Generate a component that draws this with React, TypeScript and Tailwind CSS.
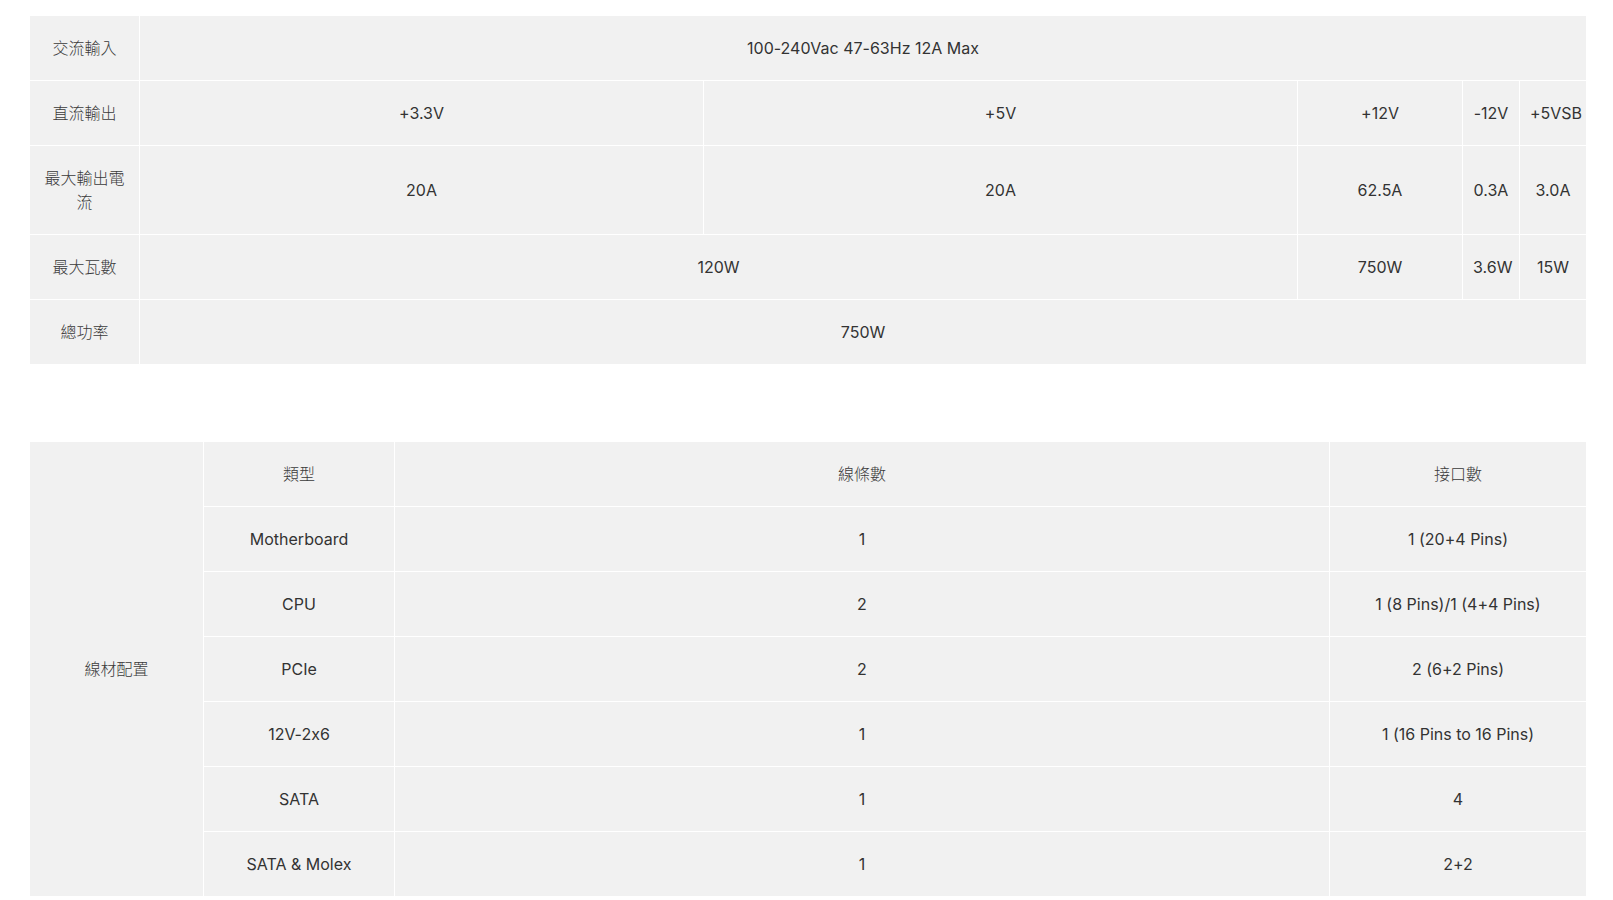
const cell = 'border border-white px-[10px] py-[20px] text-center align-middle leading-6'
const label = `${cell} font-light text-[#3a3a3a]`
const narrow = `${cell} px-0`

const cables = [
  ['Motherboard', '1', '1 (20+4 Pins)'],
  ['CPU', '2', '1 (8 Pins)/1 (4+4 Pins)'],
  ['PCIe', '2', '2 (6+2 Pins)'],
  ['12V-2x6', '1', '1 (16 Pins to 16 Pins)'],
  ['SATA', '1', '4'],
  ['SATA & Molex', '1', '2+2'],
]

export default function App() {
  return (
    <div className="min-h-screen bg-white pl-[29px] pr-[27px] pt-[15px] font-['Inter','Noto_Sans_CJK_TC',sans-serif] text-[16px] text-[#333] [font-variant-ligatures:no-contextual]">
      <table className="w-full table-fixed border-collapse bg-[#f1f1f1]">
        <colgroup>
          <col className="w-[110px]" />
          <col className="w-[564px]" />
          <col className="w-[594px]" />
          <col className="w-[165px]" />
          <col className="w-[57px]" />
          <col className="w-[67px]" />
        </colgroup>
        <tbody>
          <tr>
            <td className={label}>交流輸入</td>
            <td className={cell} colSpan={5}>100-240Vac 47-63Hz 12A Max</td>
          </tr>
          <tr>
            <td className={label}>直流輸出</td>
            <td className={cell}>+3.3V</td>
            <td className={cell}>+5V</td>
            <td className={cell}>+12V</td>
            <td className={narrow}>-12V</td>
            <td className={narrow}>+5VSB</td>
          </tr>
          <tr>
            <td className={label}>最大輸出電流</td>
            <td className={cell}>20A</td>
            <td className={cell}>20A</td>
            <td className={cell}>62.5A</td>
            <td className={narrow}>0.3A</td>
            <td className={narrow}>3.0A</td>
          </tr>
          <tr>
            <td className={label}>最大瓦數</td>
            <td className={cell} colSpan={2}>120W</td>
            <td className={cell}>750W</td>
            <td className={narrow}>3.6W</td>
            <td className={narrow}>15W</td>
          </tr>
          <tr>
            <td className={label}>總功率</td>
            <td className={cell} colSpan={5}>750W</td>
          </tr>
        </tbody>
      </table>

      <table className="mt-[76px] w-full table-fixed border-collapse bg-[#f1f1f1]">
        <colgroup>
          <col className="w-[174px]" />
          <col className="w-[191px]" />
          <col className="w-[935px]" />
          <col className="w-[257px]" />
        </colgroup>
        <tbody>
          <tr>
            <td className={label} rowSpan={7}>線材配置</td>
            <td className={label}>類型</td>
            <td className={label}>線條數</td>
            <td className={label}>接口數</td>
          </tr>
          {cables.map(([type, count, ports]) => (
            <tr key={type}>
              <td className={cell}>{type}</td>
              <td className={cell}>{count}</td>
              <td className={cell}>{ports}</td>
            </tr>
          ))}
        </tbody>
      </table>
    </div>
  )
}
